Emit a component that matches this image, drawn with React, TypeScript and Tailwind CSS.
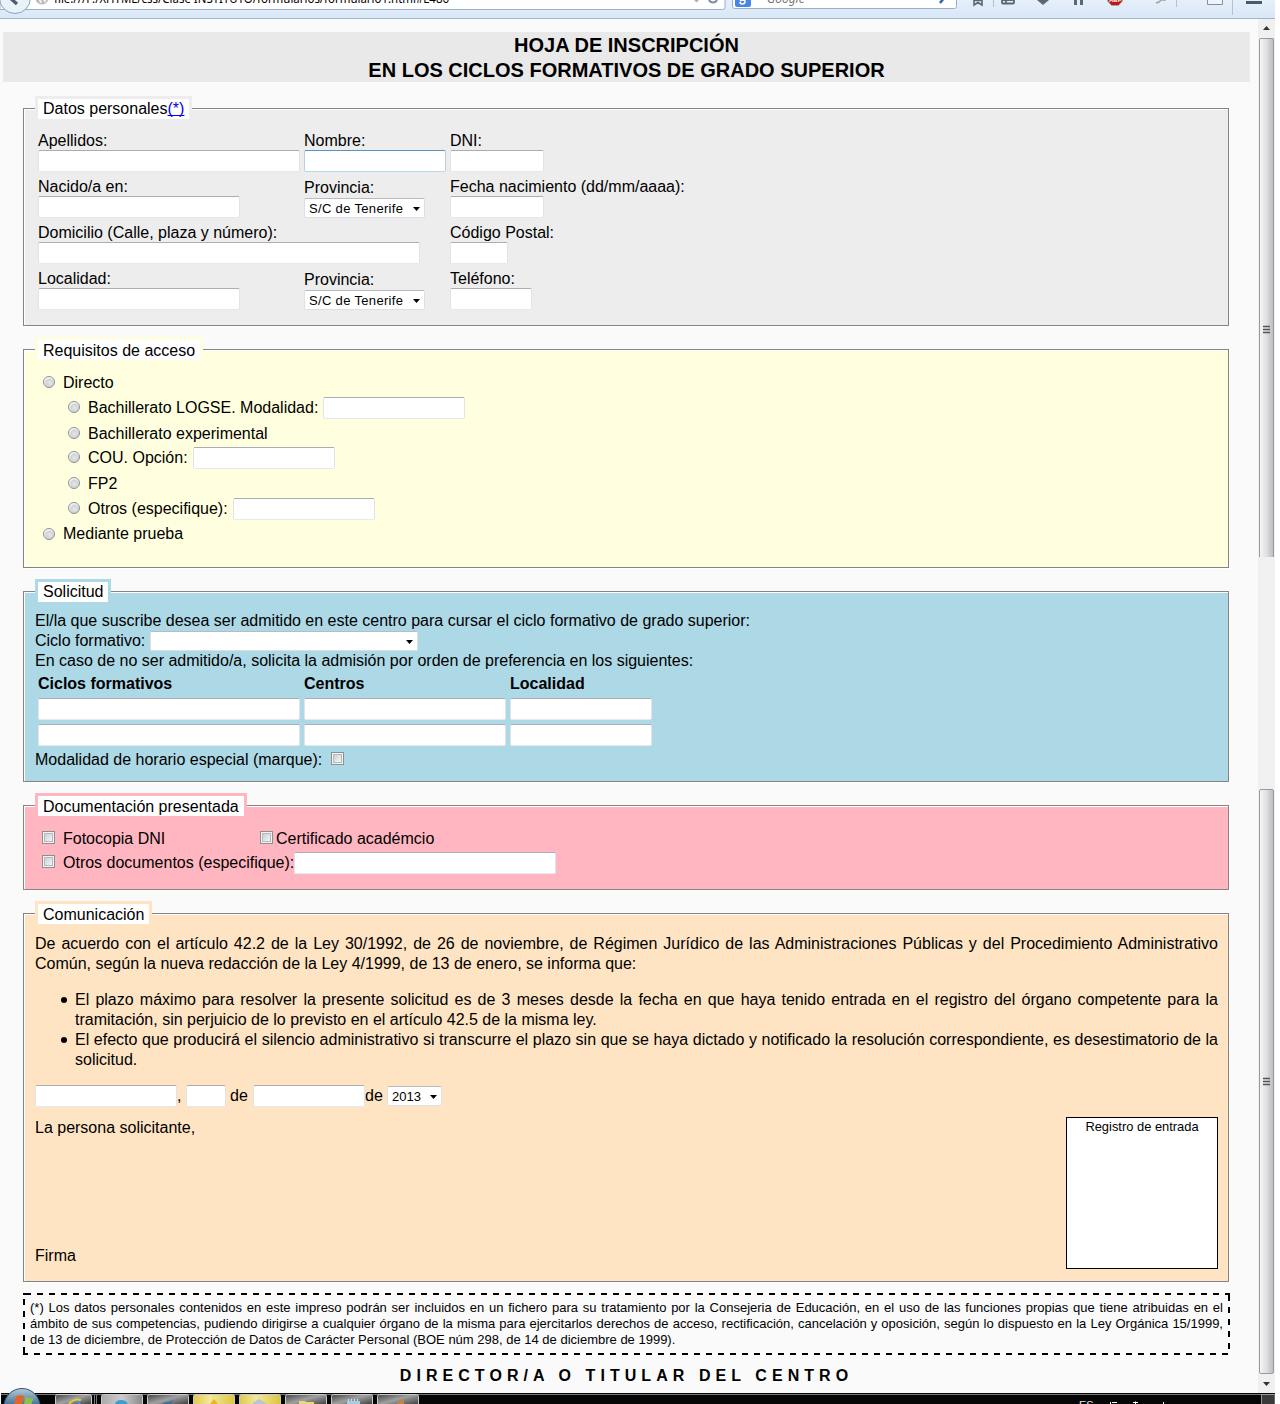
import React from "react";

function Field({ className = "" }: { className?: string }) {
  return (
    <input
      type="text"
      className={
        "block h-[22px] shrink-0 rounded-[2px] border border-[#e2e3ea] border-t-[#abadb3] border-b-[#e3e9ef] bg-white px-1 text-[13px] outline-none " +
        className
      }
    />
  );
}

function Select({ value = "", className = "" }: { value?: string; className?: string }) {
  return (
    <div
      className={
        "flex h-5 shrink-0 items-center justify-between rounded-[2px] border border-[#dcdfe6] border-t-[#b9bbc0] bg-white pr-1 pl-1 text-[13px] leading-[18px] whitespace-nowrap " +
        className
      }
    >
      <span className="h-[18px] leading-5">{value}</span>
      <svg width="7" height="4" viewBox="0 0 7 4" className="mt-px">
        <path d="M0 0h7L3.5 4z" fill="#000" />
      </svg>
    </div>
  );
}

function Radio({ className = "mt-[4px]" }: { className?: string }) {
  return (
    <span
      className={
        "block h-3 w-3 shrink-0 rounded-full border border-[#8e8f8f] bg-[radial-gradient(circle_at_55%_60%,#e6e8ea_0,#cfd3d8_45%,#fafafa_68%)] " +
        className
      }
    />
  );
}

function Check({ className = "" }: { className?: string }) {
  return (
    <span className={"block h-[13px] w-[13px] shrink-0 border border-[#8e8f8f] bg-[#f4f4f4] p-px " + className}>
      <span className="block h-full w-full border border-[#b5b9be] bg-linear-to-br from-[#cbcfd5] to-[#f6f6f6]" />
    </span>
  );
}

function Section({
  title,
  className,
  legend,
  children,
}: {
  title: React.ReactNode;
  className: string;
  legend: string;
  children: React.ReactNode;
}) {
  return (
    <section
      className={
        "ml-[23px] w-[1206px] border border-[#848484] pl-[11px] shadow-[inset_1px_1px_0_#fff,1px_1px_0_#fff] " + className
      }
    >
      <h2 className={"-mt-[13px] h-[26px] w-fit border-[3px] bg-white px-[5px] " + legend}>{title}</h2>
      {children}
    </section>
  );
}

function Cell({ label, children, className = "" }: { label: string; children: React.ReactNode; className?: string }) {
  return (
    <div className={"flex flex-col justify-end " + className}>
      <span className="block h-5 leading-[22px] whitespace-nowrap">{label}</span>
      {children}
    </div>
  );
}

function Option({
  text,
  className = "",
  radio,
  field = "",
}: {
  text: string;
  className?: string;
  radio?: string;
  field?: string;
}) {
  return (
    <div className={"flex " + className}>
      <Radio className={radio} />
      <span className="ml-2 h-5 leading-[22px] whitespace-nowrap">{text}</span>
      {field && <Field className={field} />}
    </div>
  );
}

function Toolbar() {
  return (
    <header className="flex h-[19px] items-start border-b border-[#9fb6cd] bg-linear-to-b from-[#e6f0fa] to-[#d9e7f7]">
      <svg width="1275" height="18" viewBox="0 0 1275 18">
        <path d="M0-2H725V7.500Q725 9.500 722.500 9.500H0z" fill="#fff" stroke="#9ab0c6" />
        <circle cx="15" cy="-2" r="15.500" fill="#e9f1f9" stroke="#8ba3bb" />
        <path d="M9-3L17 4" stroke="#4b5c6c" strokeWidth="3.200" />
        <circle cx="42" cy="-2" r="6.500" fill="#b9b9b9" />
        <path d="M38-2l3 1 1 4-2 0zM43 0l4-1-2 4z" fill="#f1f1f1" />
        <text x="54" y="3" fontSize="12" fontFamily="Noto Sans, sans-serif" textLength="395" lengthAdjust="spacingAndGlyphs">
          file:///F:/XHTML/css/Clase INSTITUTO/formularios/formulario1.html#L486
        </text>
        <path d="M694 0h5l-2.500 2.500z" fill="#a8b4c0" />
        <path d="M709 0a4.500 4.500 0 0 0 8 0" fill="none" stroke="#7f8fa0" strokeWidth="2" />
        <path d="M732.500-1V6.500Q732.500 8.500 734.500 8.500H954.500Q956.500 8.500 956.500 6.500V-1z" fill="#fff" stroke="#9ab0c6" />
        <path d="M735 0h16v5q0 2-2 2h-12q-2 0-2-2z" fill="#4a86ea" />
        <path d="M740 1q3-2 5 0 0 3-2.500 3T740 2" fill="none" stroke="#fff" strokeWidth="1.600" />
        <text x="767" y="3" fontSize="12" fontStyle="italic" fill="#777" fontFamily="Noto Sans, sans-serif">
          Google
        </text>
        <path d="M944-2l-4 5" stroke="#2d65a5" strokeWidth="2.500" />
        <path d="M974-1V5l4-2.500 4 2.500V-1M974 0.500h8" fill="none" stroke="#5a6876" strokeWidth="1.600" />
        <path d="M993.500 0v7" stroke="#b3c2d2" />
        <path d="M1002-2v4.500q0 1 1 1h10q1 0 1-1V-2M1002 0h12M1006-2v5" fill="none" stroke="#5a6876" strokeWidth="1.800" />
        <path d="M1037 0h12l-6 5z" fill="#5a6876" />
        <path d="M1075.500 0v5M1081.500 0v5" stroke="#5a6876" strokeWidth="3" />
        <path d="M1107.500-2h15v3l-4 4.500h-7l-4-4.500z" fill="#c31414" stroke="#a9a9a9" />
        <text x="1109" y="2" fontSize="6" fontWeight="700" fill="#fff" fontFamily="Liberation Sans, sans-serif">
          ABP
        </text>
        <path d="M1156 3l3-1 2-2h5" fill="none" stroke="#9aa2ab" strokeWidth="1.500" />
        <path d="M1176.500 0v7" stroke="#b3c2d2" />
        <path d="M1207.500-1V4.500H1222.500V-1" fill="#f0f4f8" stroke="#8a8f96" />
        <path d="M1232.500 0v15" stroke="#b3c2d2" />
        <path d="M1246 2.500h16" stroke="#4c5b6a" strokeWidth="3" />
      </svg>
    </header>
  );
}

function Thumb({ className }: { className: string }) {
  return (
    <div
      className={
        "flex items-center justify-center border border-[#9a9a9e] bg-linear-to-r from-[#f5f5f5] via-[#e0e0e2] to-[#bcbcc2] " +
        className
      }
    >
      <svg width="7" height="9" viewBox="0 0 7 9">
        <path d="M0 1.500h7M0 4.500h7M0 7.500h7" stroke="#555" strokeWidth="1.500" />
      </svg>
    </div>
  );
}

function Scrollbar() {
  return (
    <aside className="flex w-[17px] flex-col items-center bg-[#f0f0f0]">
      <div className="flex h-[18px] items-center">
        <svg width="7" height="4" viewBox="0 0 7 4">
          <path d="M0 4h7L3.500 0z" fill="#333" />
        </svg>
      </div>
      <Thumb className="mt-px h-[519px] w-[15px] rounded-t-[2px] border-b-0 pt-[63px]" />
      <Thumb className="mt-[232px] h-[585px] w-[15px] rounded-[2px]" />
      <div className="flex h-[20px] items-center">
        <svg width="7" height="4" viewBox="0 0 7 4">
          <path d="M0 0h7L3.500 4z" fill="#333" />
        </svg>
      </div>
    </aside>
  );
}

function Taskbar() {
  const tabs = [
    [55, 37, "url(#steel)"],
    [101, 42, "url(#light)"],
    [147, 42, "url(#steel)"],
    [193, 42, "url(#gold)"],
    [239, 42, "url(#gold)"],
    [285, 42, "url(#steel)"],
    [331, 42, "url(#steel)"],
    [377, 42, "url(#steel)"],
  ] as const;
  return (
    <footer className="relative z-10 -mt-[11px] h-4">
      <svg width="1275" height="16" viewBox="0 0 1275 16">
        <defs>
          <linearGradient id="steel" x2="1" y2="1">
            <stop stopColor="#444" />
            <stop offset=".45" stopColor="#a0a0a0" />
            <stop offset="1" stopColor="#303030" />
          </linearGradient>
          <linearGradient id="light">
            <stop stopColor="#aaa" />
            <stop offset=".5" stopColor="#ccc" />
            <stop offset="1" stopColor="#888" />
          </linearGradient>
          <linearGradient id="gold">
            <stop stopColor="#dfc94f" />
            <stop offset=".4" stopColor="#f3e89a" />
            <stop offset="1" stopColor="#dcc63f" />
          </linearGradient>
          <linearGradient id="orb" x2="0" y2="1">
            <stop stopColor="#b8cbd9" />
            <stop offset=".5" stopColor="#38698f" />
          </linearGradient>
        </defs>
        <path d="M1 5h1274v11H1z" fill="#060606" />
        <path d="M1 6.500h1274" stroke="#777" />
        {tabs.map(([x, w, fill]) => (
          <path key={x} d={`M${x + 0.5} 18V8.500q0-2 2-2h${w - 5}q2 0 2 2V18z`} fill={fill} stroke="#c9c9c9" />
        ))}
        <path d="M94.500 7v9M96.500 7v9" stroke="#777" />
        <circle cx="22" cy="18.500" r="18" fill="url(#orb)" stroke="#2c5474" />
        <path d="M16 8.500q4-2 8-.5l-2 8h-8z" fill="#e2642b" />
        <path d="M25.500 9q4 2 8 .5l-2 6.500h-7.500z" fill="#8dbf4a" />
        <path d="M70 16q2-4 5-4t5 4" fill="none" stroke="#3aa1dc" strokeWidth="2" />
        <path d="M69 16q5-6 12-4" fill="none" stroke="#f0c43c" strokeWidth="2" />
        <path d="M115 16q1-4 6-4t7 4z" fill="#3c9fd2" />
        <path d="M162 16l4-2 2 0 6-2-4 4z" fill="#3b6ea5" />
        <path d="M210 16l4-5 4 5z" fill="#e8b91e" />
        <path d="M252 16l2-2 5-3 5 3 3 2z" fill="#b9c5d0" />
        <path d="M299 13h6l1 1h8v2h-15z" fill="#ecd67a" />
        <path d="M347 13h13v3h-13z" fill="#9ed0e8" />
        <path d="M348.500 11v2M351.500 11v2M354.500 11v2M357.500 11v2" stroke="#ddd" />
        <path d="M396 16l4-3 4-2v5z" fill="#c98341" />
        <text x="1079" y="21" fontSize="11" fill="#e8e8e8" fontFamily="Liberation Sans, sans-serif">
          ES
        </text>
        <path d="M1110.500 14v2M1112 14.500h5M1133 14.500h5M1135.500 13.500v2.500M1163.500 14v2" stroke="#fff" />
        <path d="M1261.500 17V6.500H1275V17" fill="#3a3a3a" stroke="#999" />
      </svg>
    </footer>
  );
}

const footnote = [
  "(*) Los datos personales contenidos en este impreso podrán ser incluidos en un fichero para su tratamiento por la Consejeria de Educación, en el uso de las funciones propias que tiene atribuidas en el",
  "ámbito de sus competencias, pudiendo dirigirse a cualquier órgano de la misma para ejercitarlos derechos de acceso, rectificación, cancelación y oposición, según lo dispuesto en la Ley Orgánica 15/1999,",
];

export default function App() {
  return (
    <div className="h-[1404px] w-[1275px] overflow-hidden bg-[#fafafa] font-['Liberation_Sans',Arial,sans-serif] text-base leading-5 text-black">
      <Toolbar />
      <div className="flex h-[1380px]">
        <main className="w-[1258px] shrink-0">
          <h1 className="mt-[13px] ml-[3px] h-[50px] w-[1247px] bg-[#e9e9e9] pt-px text-center text-[20px] leading-[25px] font-bold">
            HOJA DE INSCRIPCIÓN
            <br />
            EN LOS CICLOS FORMATIVOS DE GRADO SUPERIOR
          </h1>

          <Section
            title={
              <>
                Datos personales
                <a className="text-[#0000ee] underline [text-decoration-skip-ink:none]">(*)</a>
              </>
            }
            className="mt-[26px] h-[218px] bg-[#ededed]"
            legend="leading-5 border-[#ededed]"
          >
            <div className="mt-[4px] ml-[3px] grid auto-rows-[46px] grid-cols-[266px_146px_300px]">
              <Cell label="Apellidos:">
                <Field className="w-[262px]" />
              </Cell>
              <Cell label="Nombre:">
                <Field className="w-[142px] border-x-[#b5cfe7]! border-t-[#5794bf]! border-b-[#b7d9ed]!" />
              </Cell>
              <Cell label="DNI:">
                <Field className="w-[94px]" />
              </Cell>
              <Cell label="Nacido/a en:">
                <Field className="w-[202px]" />
              </Cell>
              <Cell label="Provincia:">
                <Select value="S/C de Tenerife" className="mt-px w-[121px] tracking-[0.33px]" />
              </Cell>
              <Cell label="Fecha nacimiento (dd/mm/aaaa):">
                <Field className="w-[94px]" />
              </Cell>
              <Cell label="Domicilio (Calle, plaza y número):" className="col-span-2">
                <Field className="w-[382px]" />
              </Cell>
              <Cell label="Código Postal:">
                <Field className="w-[58px]" />
              </Cell>
              <Cell label="Localidad:">
                <Field className="w-[202px]" />
              </Cell>
              <Cell label="Provincia:">
                <Select value="S/C de Tenerife" className="mt-px w-[121px] tracking-[0.33px]" />
              </Cell>
              <Cell label="Teléfono:">
                <Field className="w-[82px]" />
              </Cell>
            </div>
          </Section>

          <Section
            title="Requisitos de acceso"
            className="mt-[23px] h-[219px] bg-[#ffffdf]"
            legend="leading-[22px] border-[#ffffdf]"
          >
            <div className="mt-[9px] ml-2">
              <Option text="Directo" className="h-[25px]" />
              <div className="ml-[25px]">
                <Option text="Bachillerato LOGSE. Modalidad:" className="h-[26px]" field="ml-[5px] w-[142px]" />
                <Option text="Bachillerato experimental" className="h-[24px]" />
                <Option text="COU. Opción:" className="h-[26px]" field="ml-[5px] w-[142px]" />
                <Option text="FP2" className="h-[25px]" />
                <Option text="Otros (especifique):" className="h-[25px]" field="ml-[5px] w-[142px]" />
              </div>
              <Option text="Mediante prueba" radio="mt-[5px]" />
            </div>
          </Section>

          <Section
            title="Solicitud"
            className="mt-[23px] h-[191px] bg-[#add8e6]"
            legend="leading-5 border-[#add8e6]"
          >
            <p className="mt-[6px]">
              El/la que suscribe desea ser admitido en este centro para cursar el ciclo formativo de grado superior:
            </p>
            <div className="flex">
              <span>Ciclo formativo:</span>
              <Select className="ml-[5px] w-[268px]" />
            </div>
            <p>En caso de no ser admitido/a, solicita la admisión por orden de preferencia en los siguientes:</p>
            <div className="mt-[3px] ml-[3px] grid grid-cols-[262px_202px_142px] gap-x-1 gap-y-1 font-bold">
              <span>Ciclos formativos</span>
              <span>Centros</span>
              <span>Localidad</span>
              <Field />
              <Field />
              <Field />
              <Field />
              <Field />
              <Field />
            </div>
            <div className="mt-[4px] flex">
              <span>Modalidad de horario especial (marque):</span>
              <Check className="mt-[2px] ml-[9px]" />
            </div>
          </Section>

          <Section
            title="Documentación presentada"
            className="mt-[23px] h-[85px] bg-[#ffb6c1]"
            legend="leading-[22px] border-[#ffb6c1]"
          >
            <div className="mt-[9px] ml-[7px] flex h-6 leading-[22px]">
              <div className="flex w-[218px]">
                <Check className="mt-[3px] mr-[8px]" />
                Fotocopia DNI
              </div>
              <Check className="mt-[3px] mr-[3px]" />
              Certificado académcio
            </div>
            <div className="ml-[7px] flex leading-[22px]">
              <Check className="mt-[3px] mr-[8px]" />
              <span>Otros documentos (especifique):</span>
              <Field className="w-[262px]" />
            </div>
          </Section>

          <Section
            title="Comunicación"
            className="mt-[23px] h-[369px] bg-[#ffe4c4]"
            legend="leading-[22px] border-[#ffe4c4]"
          >
            <div className="mt-[7px] w-[1183px]">
              <p className="text-justify">
                De acuerdo con el artículo 42.2 de la Ley 30/1992, de 26 de noviembre, de Régimen Jurídico de las
                Administraciones Públicas y del Procedimiento Administrativo Común, según la nueva redacción de la Ley
                4/1999, de 13 de enero, se informa que:
              </p>
              <ul className="mt-4 list-none pl-10 text-justify *:relative *:before:absolute *:before:top-[7px] *:before:-left-[14px] *:before:h-[6px] *:before:w-[6px] *:before:rounded-full *:before:bg-black *:before:content-['']">
                <li>
                  El plazo máximo para resolver la presente solicitud es de 3 meses desde la fecha en que haya tenido
                  entrada en el registro del órgano competente para la tramitación, sin perjuicio de lo previsto en el
                  artículo 42.5 de la misma ley.
                </li>
                <li>
                  El efecto que producirá el silencio administrativo si transcurre el plazo sin que se haya dictado y
                  notificado la resolución correspondiente, es desestimatorio de la solicitud.
                </li>
              </ul>
              <div className="mt-[15px] flex h-8 leading-[22px]">
                <Field className="w-[142px]" />
                <span className="w-[9px]">,</span>
                <Field className="w-[40px]" />
                <span className="ml-[4px] w-[23px]">de</span>
                <Field className="w-[112px]" />
                <span className="w-[22px]">de</span>
                <Select value="2013" className="mt-px w-[55px]" />
              </div>
              <div className="flex justify-between">
                <div className="mt-px flex h-[148px] flex-col justify-between">
                  <span>La persona solicitante,</span>
                  <span>Firma</span>
                </div>
                <div className="h-[152px] w-[152px] border border-black bg-white pt-px text-center text-[12.9px] leading-4">
                  Registro de entrada
                </div>
              </div>
            </div>
          </Section>

          <div className="mt-[11px] ml-[23px] h-[62px] w-[1207px] px-[7px] pt-[7px] text-[13px] leading-4 whitespace-nowrap [background:linear-gradient(#000,#000)_0_0/8px_2px_no-repeat,repeating-linear-gradient(90deg,#000_0_6px,transparent_6px_12px)_2px_0/1205px_2px_no-repeat,repeating-linear-gradient(90deg,#000_0_6px,transparent_6px_12px)_-1px_60px/1208px_2px_no-repeat,repeating-linear-gradient(#000_0_6px,transparent_6px_12px)_0_6px/2px_56px_no-repeat,repeating-linear-gradient(#000_0_6px,transparent_6px_12px)_1205px_2px/2px_60px_no-repeat]">
            {footnote.map((line) => (
              <p key={line} className="h-4 w-[1193px] [text-align-last:justify]">
                {line}
              </p>
            ))}
            <p>de 13 de diciembre, de Protección de Datos de Carácter Personal (BOE núm 298, de 14 de diciembre de 1999).</p>
          </div>
          <p className="mt-[11px] ml-[3px] w-[1247px] text-center font-bold tracking-[5.06px]">
            DIRECTOR/A O TITULAR DEL CENTRO
          </p>
        </main>
        <Scrollbar />
      </div>
      <Taskbar />
    </div>
  );
}
